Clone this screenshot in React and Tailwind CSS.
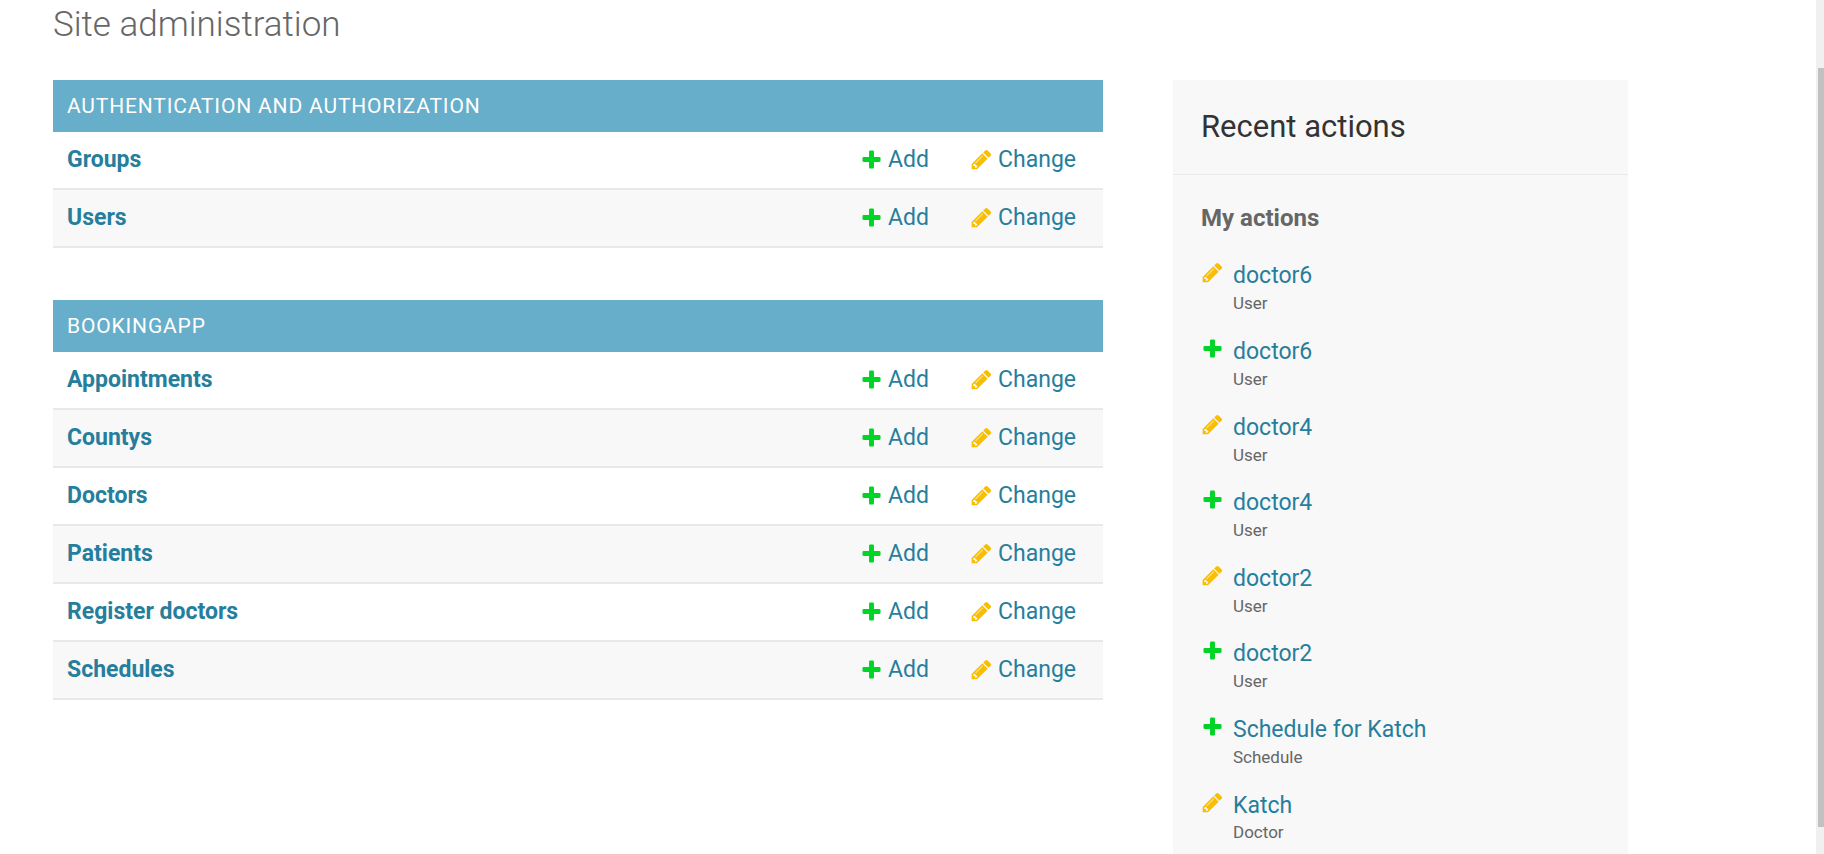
const apps = [
  { name: "Authentication and Authorization", models: ["Groups", "Users"] },
  {
    name: "Bookingapp",
    models: ["Appointments", "Countys", "Doctors", "Patients", "Register doctors", "Schedules"],
  },
];

const actions = [
  { kind: "change", label: "doctor6", type: "User" },
  { kind: "add", label: "doctor6", type: "User" },
  { kind: "change", label: "doctor4", type: "User" },
  { kind: "add", label: "doctor4", type: "User" },
  { kind: "change", label: "doctor2", type: "User" },
  { kind: "add", label: "doctor2", type: "User" },
  { kind: "add", label: "Schedule for Katch", type: "Schedule" },
  { kind: "change", label: "Katch", type: "Doctor" },
];

function PlusIcon() {
  return (
    <svg className="size-[23px] shrink-0 fill-[#00d427]" viewBox="0 0 1792 1792" aria-hidden="true">
      <path d="M1600 796v192q0 40-28 68t-68 28h-416v416q0 40-28 68t-68 28h-192q-40 0-68-28t-28-68v-416h-416q-40 0-68-28t-28-68v-192q0-40 28-68t68-28h416v-416q0-40 28-68t68-28h192q40 0 68 28t28 68v416h416q40 0 68 28t28 68z" />
    </svg>
  );
}

function PencilIcon() {
  return (
    <svg className="size-[23px] shrink-0 fill-[#fabe00]" viewBox="0 0 1792 1792" aria-hidden="true">
      <path d="M491 1536l91-91-235-235-91 91v107h128v128h107zm523-928q0-22-22-22-10 0-17 7l-542 542q-7 7-7 17 0 22 22 22 10 0 17-7l542-542q7-7 7-17zm-54-192l416 416-832 832h-416v-416zm683 96q0 53-37 90l-166 166-416-416 166-165q36-38 90-38 53 0 91 38l235 234q37 39 37 91z" />
    </svg>
  );
}

function AppModule({ app }) {
  return (
    <table className="mb-[52px] w-full border-separate border-spacing-0">
      <caption className="h-[52px] bg-[#66aec9] px-3.5 text-left text-[21px] leading-[52px] tracking-[0.04em] text-white uppercase">
        <a href="#app">{app.name}</a>
      </caption>
      <tbody className="leading-9">
        {app.models.map((model) => (
          <tr key={model} className="even:bg-[#f8f8f8]">
            <th scope="row" className="w-full border-b-2 border-[#e8e8e8] px-3.5 py-2.5 text-left font-bold">
              <a href="#list">{model}</a>
            </th>
            <td className="border-b-2 border-[#e8e8e8] py-2.5 pr-[27px] pl-3.5">
              <a href="#add" className="flex gap-[5px]">
                <span className="pt-1.5">
                  <PlusIcon />
                </span>
                Add
              </a>
            </td>
            <td className="border-b-2 border-[#e8e8e8] py-2.5 pr-[27px] pl-3.5">
              <a href="#change" className="flex gap-[5px]">
                <span className="pt-1.5">
                  <PencilIcon />
                </span>
                Change
              </a>
            </td>
          </tr>
        ))}
      </tbody>
    </table>
  );
}

export default function App() {
  return (
    <div className="flex h-screen overflow-hidden bg-white font-[Roboto,sans-serif] text-[23px] text-[#267e9d]">
      <div className="flex-1 pr-[188px] pl-[53px]">
        <h1 className="mb-[30px] text-[35px] leading-[50px] font-light text-[#666]">Site administration</h1>
        <div className="flex items-start gap-[70px]">
          <main className="max-w-[1050px] flex-1">
            {apps.map((app) => (
              <AppModule key={app.name} app={app} />
            ))}
          </main>
          <aside className="w-[455px] shrink-0 bg-[#f8f8f8]">
            <h2 className="border-b border-[#eaeaea] px-7 text-[31px] leading-[94px] text-[#333]">Recent actions</h2>
            <div className="px-7 pt-[27px]">
              <h3 className="mb-[25px] text-[24px] leading-[1.39] font-bold text-[#666]">My actions</h3>
              <ul className="leading-[1.39]">
                {actions.map((action, i) => (
                  <li key={i} className="mb-5 flex gap-[9px]">
                    <span className="pt-px">{action.kind === "add" ? <PlusIcon /> : <PencilIcon />}</span>
                    <div>
                      <a href="#object" className="block">
                        {action.label}
                      </a>
                      <span className="block text-[17px] text-[#666]">{action.type}</span>
                    </div>
                  </li>
                ))}
              </ul>
            </div>
          </aside>
        </div>
      </div>
      <div className="flex w-2 flex-col bg-[#f0f0f0] pl-0.5" aria-hidden="true">
        <div className="grow-[68]" />
        <div className="grow-[759] bg-[#c1c1c1]" />
        <div className="grow-[27]" />
      </div>
    </div>
  );
}
